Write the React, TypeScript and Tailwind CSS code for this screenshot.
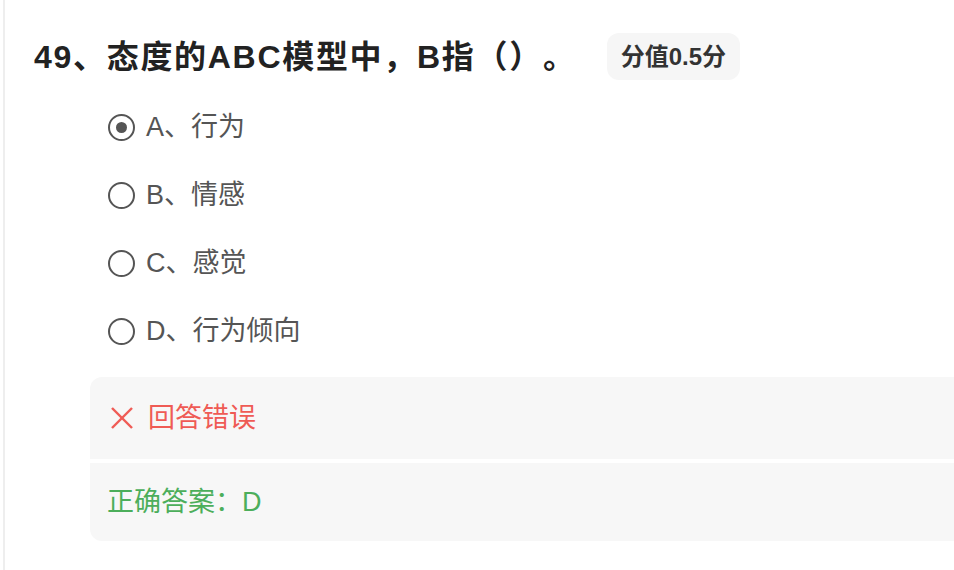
import React from 'react';

const options = [
  { key: 'A', label: '行为', checked: true },
  { key: 'B', label: '情感', checked: false },
  { key: 'C', label: '感觉', checked: false },
  { key: 'D', label: '行为倾向', checked: false },
];

const font = { fontFamily: '"Liberation Sans", "Noto Sans CJK SC", sans-serif' };

export default function App() {
  return (
    <div className="min-h-screen bg-white flex [text-spacing-trim:space-all]" style={font}>
      <div className="w-[3px] shrink-0" />
      <div className="flex-1 border-l-2 border-[#eeeeee] pl-[29px] pt-[33px] pb-8">
        {/* Question title */}
        <div className="flex items-center h-[47px]">
          <h2 className="text-[32px] font-bold text-[#222222] leading-none tracking-[1.7px]">49、态度的ABC模型中，B指（）。</h2>
          <span className="ml-[30px] h-[47px] px-[14px] flex items-center rounded-xl bg-[#f6f6f6] text-[24px] font-bold text-[#333333]">
            分值0.5分
          </span>
        </div>

        {/* Options */}
        <div className="ml-[74px] mt-[13px] flex flex-col">
          {options.map((o) => (
            <label key={o.key} className="h-[68px] flex items-center gap-[11px] text-[27px] text-[#555555]">
              <span className="w-[27px] h-[27px] rounded-full border-2 border-[#555555] flex items-center justify-center shrink-0">
                {o.checked && <span className="w-[11px] h-[11px] rounded-full bg-[#555555]" />}
              </span>
              <span>{o.key}、{o.label}</span>
            </label>
          ))}
        </div>

        {/* Result panel */}
        <div className="ml-[56px] mt-[12px] flex flex-col gap-[4px]">
          <div className="h-[82px] bg-[#f7f7f7] rounded-tl-xl flex items-center pl-[21px] gap-[15px] text-[27px] text-[#ef5b55]">
            <svg width="22" height="22" viewBox="0 0 22 22" fill="none" stroke="#ef5b55" strokeWidth="2.4">
              <line x1="1" y1="1" x2="21" y2="21" />
              <line x1="21" y1="1" x2="1" y2="21" />
            </svg>
            <span>回答错误</span>
          </div>
          <div className="h-[78px] bg-[#f7f7f7] rounded-bl-xl flex items-center pl-[17px] text-[27px] text-[#4cae5b]">
            正确答案：D
          </div>
        </div>
      </div>
    </div>
  );
}
